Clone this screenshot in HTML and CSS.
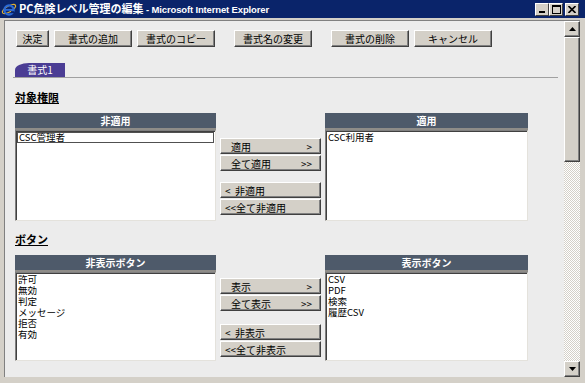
FILE: index.html
```html
<!DOCTYPE html>
<html lang="ja">
<head>
    <meta charset="UTF-8">
    <title>PC危険レベル管理の編集</title>
    <link rel="stylesheet" href="styles.css">
</head>
<body>
<div class="window">
    <div class="titlebar">
        <svg class="app-icon" width="16" height="16" viewBox="0 0 16 16">
            <ellipse cx="8" cy="8" rx="7.5" ry="3" fill="none" stroke="#e0b030" stroke-width="1.2" transform="rotate(-30 8 8)"/>
            <circle cx="8" cy="9" r="4.6" fill="none" stroke="#2a6ad8" stroke-width="2.2"/>
            <rect x="4" y="8" width="8.5" height="1.8" fill="#2a6ad8"/>
            <rect x="10" y="10.2" width="3" height="2" fill="#0a246a"/>
        </svg>
        <span class="title">PC危険レベル管理の編集 <span class="title-latin">- Microsoft Internet Explorer</span></span>
        <div class="caption-buttons">
            <span class="cap-btn">
                <svg width="8" height="8" viewBox="0 0 8 8"><rect x="1" y="6" width="6" height="2" fill="#000"/></svg>
            </span>
            <span class="cap-btn">
                <svg width="9" height="9" viewBox="0 0 9 9"><rect x="0.5" y="0.5" width="8" height="8" fill="none" stroke="#000"/><rect x="0" y="0" width="9" height="2" fill="#000"/></svg>
            </span>
            <span class="cap-btn cap-close">
                <svg width="8" height="7" viewBox="0 0 8 7"><path d="M0.5 0 L7.5 7 M7.5 0 L0.5 7" stroke="#000" stroke-width="1.6"/></svg>
            </span>
        </div>
    </div>

    <div class="client">
        <div class="page">
            <div class="toolbar">
                <button class="btn btn-small">決定</button>
                <button class="btn">書式の追加</button>
                <button class="btn">書式のコピー</button>
                <button class="btn btn-gap">書式名の変更</button>
                <button class="btn btn-gap">書式の削除</button>
                <button class="btn">キャンセル</button>
            </div>

            <div class="tabs">
                <span class="tab">書式1</span>
            </div>

            <div class="section-title">対象権限</div>
            <div class="picker">
                <div class="panel panel-left">
                    <div class="panel-head">非適用</div>
                    <div class="listbox">
                        <div class="item focused">CSC管理者</div>
                    </div>
                </div>
                <div class="movers">
                    <button class="mv"><span>適用</span><span>&gt;</span></button>
                    <button class="mv"><span>全て適用</span><span>&gt;&gt;</span></button>
                    <button class="mv mv-first-back"><span class="back">&lt;&nbsp;&nbsp;非適用</span></button>
                    <button class="mv"><span class="back">&lt;&lt;全て非適用</span></button>
                </div>
                <div class="panel panel-right">
                    <div class="panel-head">適用</div>
                    <div class="listbox">
                        <div class="item">CSC利用者</div>
                    </div>
                </div>
            </div>

            <div class="section-title section-second">ボタン</div>
            <div class="picker picker-second">
                <div class="panel panel-left">
                    <div class="panel-head">非表示ボタン</div>
                    <div class="listbox">
                        <div class="item">許可</div>
                        <div class="item">無効</div>
                        <div class="item">判定</div>
                        <div class="item">メッセージ</div>
                        <div class="item">拒否</div>
                        <div class="item">有効</div>
                    </div>
                </div>
                <div class="movers">
                    <button class="mv"><span>表示</span><span>&gt;</span></button>
                    <button class="mv"><span>全て表示</span><span>&gt;&gt;</span></button>
                    <button class="mv mv-first-back"><span class="back">&lt;&nbsp;&nbsp;非表示</span></button>
                    <button class="mv"><span class="back">&lt;&lt;全て非表示</span></button>
                </div>
                <div class="panel panel-right">
                    <div class="panel-head">表示ボタン</div>
                    <div class="listbox">
                        <div class="item">CSV</div>
                        <div class="item">PDF</div>
                        <div class="item">検索</div>
                        <div class="item">履歴CSV</div>
                    </div>
                </div>
            </div>
        </div>

        <div class="scrollbar">
            <span class="sb-btn">
                <svg width="7" height="4" viewBox="0 0 7 4"><path d="M3.5 0 L7 4 L0 4 Z" fill="#000"/></svg>
            </span>
            <span class="sb-thumb"></span>
            <span class="sb-track"></span>
            <span class="sb-btn">
                <svg width="7" height="4" viewBox="0 0 7 4"><path d="M0 0 L7 0 L3.5 4 Z" fill="#000"/></svg>
            </span>
        </div>
    </div>
</div>
</body>
</html>
```

FILE: styles.css
```css
body {
    margin: 0;
    font-family: "Noto Sans CJK JP", "Liberation Sans", sans-serif;
    font-size: 10px;
    color: #000000;
    background: #d4d0c8;
}
.window {
    width: 585px;
    height: 383px;
    background: #d4d0c8;
    display: flex;
    flex-direction: column;
    box-sizing: border-box;
}
.titlebar {
    height: 18px;
    background: #0a246a;
    color: #ffffff;
    display: flex;
    align-items: center;
    flex-shrink: 0;
}
.app-icon {
    margin: 0 2px 0 1px;
    flex-shrink: 0;
}
.title {
    font-weight: bold;
    font-size: 11px;
    line-height: 18px;
    white-space: nowrap;
}
.title-latin {
    font-family: "Liberation Sans", sans-serif;
    font-size: 9.5px;
    letter-spacing: -0.15px;
}
.caption-buttons {
    margin-left: auto;
    margin-right: 6px;
    display: flex;
    align-items: center;
}
.cap-btn {
    width: 12px;
    height: 11px;
    background: #d4d0c8;
    border: 1px solid;
    border-color: #ffffff #404040 #404040 #ffffff;
    display: flex;
    align-items: center;
    justify-content: center;
}
.cap-close {
    margin-left: 2px;
}
.client {
    flex: 1;
    display: flex;
    margin: 2px 5px 6px 4px;
    border-top: 1px solid #808080;
    border-left: 1px solid #808080;
    min-height: 0;
}
.page {
    flex: 1;
    background: #ececec;
    padding: 9px 0 0 10px;
}
.toolbar {
    display: flex;
    gap: 5px;
    padding-left: 1px;
}
.btn {
    width: 78px;
    height: 17px;
    padding: 0;
    background: #d4d0c8;
    border: 1px solid;
    border-color: #ffffff #404040 #404040 #ffffff;
    box-shadow: inset -1px -1px #808080;
    font-family: "Noto Sans CJK JP", sans-serif;
    font-size: 10px;
    line-height: 14px;
    color: #000000;
}
.btn-small {
    width: 33px;
}
.btn-gap {
    margin-left: 14px;
}
.tabs {
    margin: 16px 6px 0 -2px;
    padding-left: 2px;
    border-bottom: 1px solid #a0a0a0;
    height: 14px;
    display: flex;
}
.tab {
    width: 50px;
    height: 14px;
    background: #4b3d94;
    color: #ffffff;
    font-size: 10px;
    line-height: 14px;
    text-align: center;
    border-top-left-radius: 14px 7px;
}
.section-title {
    margin: 12px 0 9px;
    height: 14px;
    line-height: 14px;
    font-size: 11px;
    font-weight: bold;
    text-decoration: underline;
}
.section-second {
    margin-top: 11px;
}
.picker {
    display: flex;
    height: 108px;
}
.picker-second {
    height: 106px;
}
.panel {
    display: flex;
    flex-direction: column;
}
.panel-left {
    width: 201px;
}
.panel-right {
    width: 203px;
}
.panel-head {
    height: 15px;
    line-height: 15px;
    background: #4e5a6a;
    border-bottom: 2px solid #8e8c88;
    color: #ffffff;
    font-weight: bold;
    font-size: 10px;
    text-align: center;
    flex-shrink: 0;
}
.listbox {
    flex: 1;
    background: #ffffff;
    border: 1px solid;
    border-color: #808080 #e4e2dc #e4e2dc #808080;
    box-shadow: inset 1px 1px #404040;
    padding: 1px 0 0 1px;
}
.item {
    font-size: 9.5px;
    line-height: 11px;
    padding-left: 1px;
    white-space: nowrap;
}
.focused {
    border: 1px solid #505050;
    margin-right: 1px;
    line-height: 9px;
}
.movers {
    width: 101px;
    margin: 0 4px;
    padding-top: 25px;
    display: flex;
    flex-direction: column;
}
.picker-second .movers {
    padding-top: 23px;
}
.mv {
    height: 16px;
    margin-bottom: 1px;
    padding: 0 8px 0 10px;
    background: #d4d0c8;
    border: 1px solid;
    border-color: #ffffff #404040 #404040 #ffffff;
    box-shadow: inset -1px -1px #808080;
    font-family: "Noto Sans CJK JP", sans-serif;
    font-size: 10px;
    line-height: 13px;
    color: #000000;
    display: flex;
    justify-content: space-between;
    align-items: center;
}
.mv-first-back {
    margin-top: 10px;
}
.picker-second .mv-first-back {
    margin-top: 12px;
}
.back {
    margin-left: -6px;
}
.scrollbar {
    width: 16px;
    display: flex;
    flex-direction: column;
    background: #d4d0c8;
}
.sb-btn {
    width: 14px;
    height: 14px;
    background: #d4d0c8;
    border: 1px solid;
    border-color: #ffffff #404040 #404040 #ffffff;
    box-shadow: inset -1px -1px #808080;
    display: flex;
    align-items: center;
    justify-content: center;
    flex-shrink: 0;
}
.sb-thumb {
    height: 123px;
    background: #d4d0c8;
    border: 1px solid;
    border-color: #ffffff #404040 #404040 #ffffff;
    box-shadow: inset -1px -1px #808080;
    flex-shrink: 0;
}
.sb-track {
    flex: 1;
    background: repeating-conic-gradient(#ffffff 0 25%, #d4d0c8 0 50%) 0 0 / 2px 2px;
}
```
